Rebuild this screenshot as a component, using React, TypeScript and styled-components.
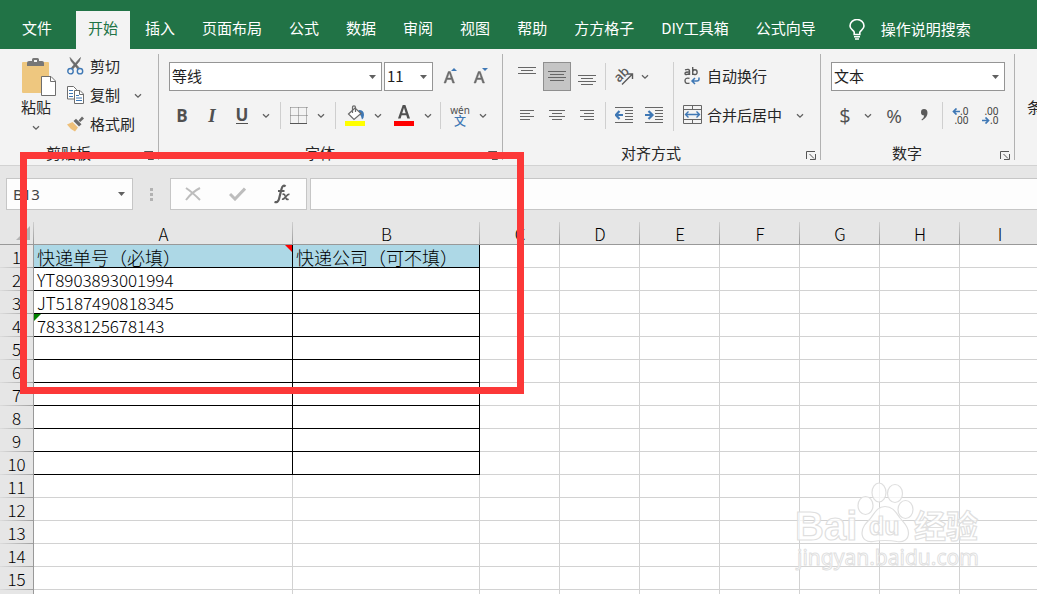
import React from 'react';
import styled, { createGlobalStyle, css } from 'styled-components';

const GlobalStyle = createGlobalStyle`
  *, *::before, *::after { box-sizing: border-box; }
  html, body, #root { height: 100%; }
  body {
    margin: 0;
    overflow: hidden;
    background: #fff;
    color: #262626;
    font-family: "Noto Sans CJK SC", "Noto Sans", sans-serif;
    font-size: 15px;
    line-height: 20px;
  }
  button, select, input { font: inherit; color: inherit; }
  button { border: 0; margin: 0; padding: 0; background: transparent; white-space: nowrap; }
  svg { display: block; flex: none; }
`;

const Workbook = styled.div`
  position: relative;
  display: flex;
  flex-direction: column;
  height: 100vh;
  overflow: hidden;
`;

/* ---------- tab strip ---------- */

const TabStrip = styled.nav`
  display: flex;
  gap: 3px;
  padding: 11px 10px 0;
  background: #217346;
  color: #fff;
`;

const Tab = styled.button<{ $active?: boolean; $file?: boolean }>`
  height: 38px;
  padding: 0 12px 4px;
  flex: none;
  color: ${(p) => (p.$active ? '#217346' : '#fff')};
  background: ${(p) => (p.$active ? '#f3f3f3' : 'transparent')};
  margin-right: ${(p) => (p.$file ? '9px' : '0')};
`;

const TellMe = styled.button`
  display: flex;
  align-items: center;
  gap: 16px;
  height: 38px;
  padding-bottom: 2px;
  margin-left: 18px;
  color: #fff;
`;

/* ---------- ribbon ---------- */

const Ribbon = styled.div`
  display: flex;
  background: #f3f3f3;
  border-bottom: 1px solid #d2d2d2;
  overflow: hidden;
`;

const Group = styled.section<{ $w: number }>`
  display: flex;
  flex-direction: column;
  flex: none;
  width: ${(p) => p.$w}px;
  padding-top: 8px;
`;

const GroupDivider = styled.div`
  flex: none;
  width: 1px;
  margin: 5px 0;
  background: #b1b1b1;
`;

const GroupBody = styled.div`
  display: flex;
  flex: 1;
  min-height: 85px;
  padding: 5px 0 0 10px;
`;

const ClipboardBody = styled.div`
  display: flex;
  flex: 1;
  align-items: flex-start;
  gap: 9px;
  min-height: 85px;
  padding-left: 14px;
`;

const GroupFooter = styled.div`
  display: flex;
  align-items: center;
  height: 23px;
  padding-bottom: 2px;
  text-align: center;
`;

const GroupLabel = styled.span`
  flex: 1;
`;

const Launcher = styled.button`
  display: flex;
  justify-content: center;
  width: 21px;
  padding: 5px 0 0 2px;
`;

const ToolRows = styled.div`
  display: flex;
  flex-direction: column;
  gap: 10px;
`;

const ToolRow = styled.div<{ $gap?: number; $indent?: boolean }>`
  display: flex;
  align-items: center;
  gap: ${(p) => p.$gap ?? 0}px;
  height: 29px;
  margin-left: ${(p) => (p.$indent ? '-2px' : '0')};
`;

const Tool = styled.button<{ $w?: number; $pressed?: boolean }>`
  display: flex;
  align-items: center;
  justify-content: center;
  flex: none;
  width: ${(p) => p.$w ?? 28}px;
  height: 29px;
  color: #505050;
  ${(p) =>
    p.$pressed &&
    css`
      background: #c5c5c5;
      border: 1px solid #8f8f8f;
    `}
`;

const Glyph = styled.span<{ $italic?: boolean; $underline?: boolean; $size?: number; $serif?: boolean; $plain?: boolean }>`
  font-family: ${(p) => (p.$serif ? '"Liberation Serif", serif' : '"Open Sans", "Noto Sans", sans-serif')};
  font-size: ${(p) => p.$size ?? 17}px;
  line-height: 16px;
  font-weight: ${(p) => (p.$plain ? 500 : 700)};
  font-style: ${(p) => (p.$italic ? 'italic' : 'normal')};
  border-bottom: ${(p) => (p.$underline ? '1px solid #505050' : '0')};
`;

const Split = styled.div<{ $tall?: boolean; $space?: number }>`
  flex: none;
  width: 1px;
  height: ${(p) => (p.$tall ? '69px' : '27px')};
  margin: 0 ${(p) => p.$space ?? 5}px;
  background: #cfcfcf;
`;

const LabelTool = styled.button<{ $icon?: number; $gap?: number }>`
  display: flex;
  align-items: center;
  gap: ${(p) => p.$gap ?? 2}px;
  padding-bottom: 2px;
  > span:first-child {
    display: flex;
    justify-content: center;
    width: ${(p) => p.$icon ?? 26}px;
  }
`;

const PasteTool = styled.button`
  display: flex;
  flex-direction: column;
  align-items: center;
  width: 44px;
  padding-top: 1px;
  > svg:last-child { margin-top: 8px; }
`;

const ClipboardList = styled.div`
  display: flex;
  flex-direction: column;
  gap: 9px;
`;

const ClipboardRow = styled.div`
  display: flex;
  align-items: center;
  gap: 11px;
  height: 20px;
`;

const MoreTool = styled.button`
  width: 30px;
  flex: none;
  margin: 48px 0 0 12px;
  height: 20px;
  text-align: left;
`;

/* ---------- drop-downs ---------- */

const SelectBox = styled.label<{ $w: number; $soft?: boolean }>`
  position: relative;
  display: block;
  flex: none;
  width: ${(p) => p.$w}px;
  height: ${(p) => (p.$soft ? 32 : 29)}px;
  select, input {
    appearance: none;
    width: 100%;
    height: 100%;
    margin: 0;
    padding: 0 16px ${(p) => (p.$soft ? 0 : 2)}px ${(p) => (p.$soft ? 6 : 2)}px;
    border: 1px solid ${(p) => (p.$soft ? '#c6c6c6' : '#959595')};
    border-radius: 0;
    background: ${(p) => (p.$soft ? '#fdfdfd' : '#fff')};
    color: ${(p) => (p.$soft ? '#444' : '#1e1e1e')};
    outline: 0;
  }
  svg { position: absolute; right: ${(p) => (p.$soft ? 8 : 6)}px; top: 50%; margin-top: -2px; }
`;

const SoftLatin = styled.span`
  display: contents;
  select, input { font-family: "Noto Sans", sans-serif; }
`;

/* ---------- formula bar ---------- */

const FormulaBar = styled.div`
  display: flex;
  align-items: center;
  height: 56px;
  padding-left: 6px;
  background: #e6e6e6;
`;

const Grip = styled.div`
  display: flex;
  flex-direction: column;
  gap: 2px;
  width: 37px;
  align-items: center;
  i { width: 3px; height: 3px; background: #b2b2b2; }
`;

const FormulaActions = styled.div`
  display: flex;
  align-items: center;
  width: 137px;
  height: 32px;
  flex: none;
  background: #fdfdfd;
  border: 1px solid #c6c6c6;
  margin-right: 3px;
  button {
    flex: 1;
    display: flex;
    justify-content: center;
    padding-right: 2px;
  }
`;

const FormulaInput = styled.input`
  flex: 1;
  min-width: 0;
  height: 32px;
  padding: 0 6px;
  border: 1px solid #c6c6c6;
  border-right: 0;
  background: #fdfdfd;
  outline: 0;
`;

/* ---------- sheet ---------- */

const Sheet = styled.main`
  flex: 1;
  min-height: 0;
  overflow: hidden;
`;

const Grid = styled.table`
  width: 100%;
  min-width: 1040px;
  table-layout: fixed;
  border-collapse: separate;
  border-spacing: 0;
  font-size: 17px;
  line-height: 20px;
  color: #000;
  th, td { padding: 0; font-weight: 300; white-space: nowrap; }
`;

const ColHead = styled.th`
  height: 23px;
  padding-top: 2px !important;
  border-bottom: 1px solid #999;
  background: linear-gradient(#cfcfcf, #999) right / 1px 100% no-repeat #e6e6e6;
`;

const Corner = styled.th`
  height: 23px;
  border-bottom: 1px solid #999;
  background: linear-gradient(#cfcfcf, #999) right / 1px 100% no-repeat #e6e6e6;
  svg { margin-left: 16px; }
`;

const RowHead = styled.th`
  height: 23px;
  border-right: 1px solid #999;
  background: linear-gradient(90deg, #dcdcdc, #a0a0a0) bottom / 100% 1px no-repeat #e6e6e6;
`;

const Cell = styled.td<{ $boxed: boolean; $title: boolean }>`
  position: relative;
  height: 23px;
  padding: 2px 0 0 3px !important;
  border-right: 1px solid ${(p) => (p.$boxed ? '#000' : '#d2d2d2')};
  border-bottom: 1px solid ${(p) => (p.$boxed ? '#000' : '#d2d2d2')};
  background: ${(p) => (p.$title ? '#add8e6' : '#fff')};
  font-size: ${(p) => (p.$title ? 18 : 17)}px;
`;

const Flag = styled.i<{ $kind: 'note' | 'text' }>`
  position: absolute;
  top: 0;
  ${(p) => (p.$kind === 'note' ? 'right: 0;' : 'left: 0;')}
  width: 7px;
  height: 7px;
  background: ${(p) => (p.$kind === 'note' ? '#f00' : '#008000')};
  clip-path: ${(p) =>
    p.$kind === 'note' ? 'polygon(0 0, 100% 0, 100% 100%)' : 'polygon(0 0, 100% 0, 0 100%)'};
`;

/* ---------- overlays ---------- */

const Highlight = styled.div`
  position: absolute;
  left: 20px;
  top: 152px;
  width: 504px;
  height: 242px;
  border: 7px solid #fc3838;
  pointer-events: none;
`;

const Watermark = styled.div`
  position: absolute;
  left: 790px;
  top: 478px;
  pointer-events: none;
`;

/* ---------- icons ---------- */

const G = '#6a6a6a';
const BLUE = '#3f78b5';

const Chevron = () => (
  <svg width="8" height="6" viewBox="0 0 8 6" fill="none" stroke="#606060" strokeWidth="1.3">
    <path d="M1 1.2 4 4.2 7 1.2" />
  </svg>
);
const Caret = () => (
  <svg width="7" height="4" viewBox="0 0 7 4" fill="#606060">
    <path d="M0 0h7L3.500 4z" />
  </svg>
);
const Bulb = () => (
  <svg width="16" height="21" viewBox="0 0 16 21" fill="none" stroke="#fff" strokeWidth="1.6">
    <path d="M5.200 15.500v-2.300C4.800 11.400 1 10.300 1 7a6.800 6.300 0 0 1 14 0c0 3.300-3.600 4.400-4.200 6.200v2.300z" />
    <path d="M5 17.800h6M6 20h4" strokeWidth="1.400" />
  </svg>
);
const PasteIcon = () => (
  <svg width="40" height="39" viewBox="-6 0 40 39">
    <rect x="0" y="4" width="27" height="31" rx="1" fill="#eec77f" />
    <path d="M5 8V5q0-2 2-2h3V1.500Q10 0 11.500 0h4Q17 0 17 1.500V3h3q2 0 2 2v3z" fill="#777" />
    <rect x="12" y="2" width="3" height="2" fill="#f3f3f3" />
    <path d="M19.500 18.500h9.500l4.500 4.500v14.500h-14z" fill="#fff" stroke="#6e6e6e" />
    <path d="M28.500 18.500v5h5" fill="none" stroke="#6e6e6e" />
  </svg>
);
const CutIcon = () => (
  <svg width="17" height="18" viewBox="0 0 17 18" fill="none">
    <path d="M3 0.500 4 4l6.500 8 1.500-1.500z" fill={G} stroke={G} strokeWidth=".6" />
    <path d="M13.500 0.500 12.500 4 6 12l-1.500-1.500z" fill={G} stroke={G} strokeWidth=".6" />
    <circle cx="3.500" cy="14.200" r="2.700" stroke={BLUE} strokeWidth="1.400" />
    <circle cx="13" cy="14.200" r="2.700" stroke={BLUE} strokeWidth="1.400" />
  </svg>
);
const CopyIcon = () => (
  <svg width="17" height="18" viewBox="0 0 17 18" fill="#fff" stroke="#6e6e6e">
    <path d="M.5.500h6l3 3v9.500h-9z" />
    <path d="M2 4.500h4M2 7.500h4M2 10.500h4" stroke={BLUE} />
    <path d="M7.500 4.500h5.500l3.500 3.500v9.500h-9z" />
    <path d="M12.500 4.500v4h4" fill="none" />
    <path d="M9 9.500h3M9 12h6M9 14.500h6" stroke={BLUE} />
  </svg>
);
const BrushIcon = () => (
  <svg width="17" height="16" viewBox="0 0 17 16">
    <path d="M0 8.500 5.500 6l5.500 5.500L8 15.500Q3 13 0 8.500z" fill="#eec07a" />
    <path d="M6.500 5 9 2.800l5.500 5.400L12 10.500z" fill={G} />
    <path d="M11.500 4.500 15 .500 17 2.500 13.300 6z" fill={G} />
  </svg>
);
const BorderIcon = () => (
  <svg width="18" height="17" viewBox="0 0 18 17" fill="none" stroke="#777">
    <path d="M.5.500h17M.5 8.500h17M.500.500v16M8.500.500v16M16.500.500v16" strokeDasharray="1 1" />
    <path d="M0 16.500h17" stroke="#555" />
  </svg>
);
const FillIcon = () => (
  <svg width="20" height="21" viewBox="0 0 20 21" fill="none">
    <rect y="16" width="20" height="5" fill="#ff0" />
    <path d="M14 5q5 0 5 5 0 3-2 4.500-.5-4-4-7z" fill={BLUE} />
    <path d="M3.500 9 10 3l6 5.500-7 6z" fill="#fff" stroke={G} strokeWidth="1.200" />
    <path d="M7.500 8V2.500Q7.500.800 9 .800t1.500 1.700V7" stroke={G} strokeWidth="1.200" />
  </svg>
);
const FontColorIcon = () => (
  <svg width="20" height="21" viewBox="0 0 20 21">
    <path d="M4 13.500 8.700 0h2.700L16 13.500h-2.700l-1-3.200H7.600l-1 3.200zM8.200 8.200h3.500L10 2.700z" fill="#505050" />
    <rect y="16" width="20" height="5" fill="#f00" />
  </svg>
);
const SizeIcon = ({ down }: { down?: boolean }) => (
  <svg width="18" height="19" viewBox="-2 0 18 19">
    <path
      d="M2 16 6.300 4.500h2L12.500 16H10.700l-1.200-3.500H5L3.800 16zM5.500 11h3.500L7.300 5.800z"
      fill={G}
      stroke={G}
      strokeWidth=".5"
    />
    <path d={down ? 'M10 1h6l-3 3z' : 'M9 4h6l-3-3z'} fill={BLUE} />
  </svg>
);

const LineIcon = ({ rows }: { rows: [number, number, number][] }) => (
  <svg width="20" height="21" viewBox="0 0 20 21" stroke="#666" fill="none">
    {rows.map(([x, y, w]) => (
      <path key={y} d={`M${x} ${y}.500h${w}`} />
    ))}
  </svg>
);
const TOP: [number, number, number][] = [[1, 1, 18], [4, 4, 12], [1, 7, 18]];
const MIDDLE: [number, number, number][] = [[1, 5, 18], [3, 8, 14], [1, 11, 18], [3, 14, 14]];
const BOTTOM: [number, number, number][] = [[1, 9, 18], [4, 12, 12], [1, 15, 18], [4, 18, 12]];
const LEFT: [number, number, number][] = [[3, 5, 14], [3, 8, 10], [3, 11, 14], [3, 14, 10]];
const CENTER: [number, number, number][] = [[2, 5, 16], [5, 8, 10], [2, 11, 16], [5, 14, 10]];
const RIGHT: [number, number, number][] = [[3, 5, 14], [7, 8, 10], [3, 11, 14], [7, 14, 10]];

const OrientIcon = () => (
  <svg width="20" height="19" viewBox="0 0 20 19" overflow="visible">
    <text
      transform="translate(5 16) rotate(-45)"
      fontFamily="Open Sans, sans-serif"
      fontWeight="600"
      fontSize="13"
      fill="#5a5a5a"
    >
      ab
    </text>
    <path d="M8 17.500 18 7.500M13.500 7h5v5" fill="none" stroke="#5a5a5a" strokeWidth="1.400" />
  </svg>
);
const IndentIcon = ({ right }: { right?: boolean }) => (
  <svg width="18" height="17" viewBox="0 0 18 17" fill="none" stroke="#666">
    <path d="M0 .5h18M10 3.500h8M10 6.500h8M10 9.500h8M10 12.500h8M0 15.500h18" />
    <path
      d={right ? 'M0 8h7M3.500 4 7.500 8l-4 4' : 'M8 8H1M4.500 4 .8 8l3.700 4'}
      stroke={BLUE}
      strokeWidth="2.200"
    />
  </svg>
);
const WrapIcon = () => (
  <svg width="16" height="18" viewBox="0 0 16 18" fill="none" stroke="#5a5a5a" strokeWidth="1.400">
    <path d="M1 2.900q4.500-1.400 4.500 1.200V8M5.500 5Q1 4.800 1 6.400t1.800 1q2 0 2.700-1.400" />
    <path d="M8.700 0v8M8.700 5q0-2.200 2.200-2.200t2.200 2.500-2.300 2.200T8.700 6" />
    <path d="M5.500 11.400q-4.500-1-4.500 2.400t4.500 2.300" />
    <path d="M15 10.500v1.500q0 2-2 2H8.500M11 11l-3 3 3 3" stroke={BLUE} strokeWidth="1.500" />
  </svg>
);
const MergeIcon = () => (
  <svg width="19" height="19" viewBox="0 0 19 19" fill="none" stroke="#666">
    <path d="M.5.500h18v18H.500zM.5 4.500h18M.5 14.500h18M9.500.500v4M9.500 14.500v4" />
    <path d="M3 9.500h13M5.500 6.500l-3 3 3 3M13.500 6.500l3 3-3 3" stroke={BLUE} strokeWidth="1.400" />
  </svg>
);
const LauncherIcon = () => (
  <svg width="10" height="9" viewBox="0 0 10 9" fill="none" stroke="#555">
    <path d="M.5 8V.5H9" />
    <path d="M3.500 3 8 7.500M9.500 3v5.500H4" />
  </svg>
);

const DecimalText = styled.span`
  display: flex;
  align-items: center;
  justify-content: flex-end;
  width: 16px;
  height: 9px;
  font: 10px/9px "Noto Sans", sans-serif;
  color: #404040;
`;
const DecimalStack = styled.span`
  display: flex;
  flex-direction: column;
  padding-right: 3px;
`;
const SmallArrow = ({ right }: { right?: boolean }) => (
  <svg width="8" height="7" viewBox="0 0 8 7" fill="none" stroke={BLUE} strokeWidth="1.700">
    <path d={right ? 'M0 3.500h6M3.500 .5l3 3-3 3' : 'M8 3.500H1.500M4.500.500l-3 3 3 3'} />
  </svg>
);
const Phonetic = styled.span`
  display: flex;
  flex-direction: column;
  align-items: center;
  font: 10px/9px "Noto Sans", sans-serif;
  b {
    font: 500 12px/11px "Noto Sans CJK SC", sans-serif;
    color: ${BLUE};
  }
`;

const BaiduMark = () => (
  <svg width="200" height="98" viewBox="0 0 200 98" fill="#fff" fillOpacity=".75" stroke="#dfdfdf" strokeWidth="1.200">
    <ellipse cx="75.500" cy="27.500" rx="7.500" ry="9" />
    <ellipse cx="89" cy="14.500" rx="7" ry="9.500" />
    <ellipse cx="105" cy="15.500" rx="7.500" ry="9" />
    <ellipse cx="115.500" cy="31.500" rx="7.500" ry="9" />
    <path d="M95 28.500c8 0 11 6 15 11.500 4 5 8.500 8 8.500 15 0 7-5.500 9.500-11.500 8.500-5-1-8-1-12-1s-7 0-12 1c-6 1-11-2.500-11-8.500s4-10 8-14c4-5 7-12.500 15-12.500z" />
    <text x="5" y="62" fontFamily="Liberation Sans, sans-serif" fontWeight="700" fontSize="40">Bai</text>
    <text x="79" y="57" fontFamily="Liberation Sans, sans-serif" fontWeight="700" fontSize="25">du</text>
    <text x="124" y="60" fontFamily="Noto Sans CJK SC, sans-serif" fontWeight="700" fontSize="32">经验</text>
    <text x="7" y="87" fontFamily="Noto Sans, sans-serif" fontSize="21" strokeWidth="1">jingyan.baidu.com</text>
  </svg>
);

/* ---------- data ---------- */

const TABS = ['插入', '页面布局', '公式', '数据', '审阅', '视图', '帮助', '方方格子', 'DIY工具箱', '公式向导'];
const COLUMNS = ['A', 'B', 'C', 'D', 'E', 'F', 'G', 'H', 'I'];
const ROWS = Array.from({ length: 15 }, (_, i) => i + 1);
const VALUES: Record<string, string> = {
  A1: '快递单号（必填）',
  B1: '快递公司（可不填）',
  A2: 'YT8903893001994',
  A3: 'JT5187490818345',
  A4: '78338125678143',
};
const FLAGS: Record<string, 'note' | 'text'> = { A1: 'note', A4: 'text' };

const Drop = ({ label, w = 18 }: { label: string; w?: number }) => (
  <Tool $w={w} aria-label={label}>
    <Chevron />
  </Tool>
);

const Dropdown = ({ label, w, value }: { label: string; w: number; value: string }) => (
  <SelectBox $w={w}>
    <select aria-label={label} defaultValue={value}>
      <option>{value}</option>
    </select>
    <Caret />
  </SelectBox>
);

const Footer = ({ label }: { label: string }) => (
  <GroupFooter>
    <GroupLabel>{label}</GroupLabel>
    <Launcher aria-label={`${label}设置`}>
      <LauncherIcon />
    </Launcher>
  </GroupFooter>
);

export default function App() {
  return (
    <Workbook>
      <GlobalStyle />
      <TabStrip>
        <Tab $file>文件</Tab>
        <Tab $active>开始</Tab>
        {TABS.map((t) => (
          <Tab key={t}>{t}</Tab>
        ))}
        <TellMe>
          <Bulb />
          操作说明搜索
        </TellMe>
      </TabStrip>

      <Ribbon>
        <Group $w={158}>
          <ClipboardBody>
            <PasteTool>
              <PasteIcon />
              <span>粘贴</span>
              <Chevron />
            </PasteTool>
            <ClipboardList>
              <ClipboardRow>
                <LabelTool $icon={17} $gap={6}>
                  <span><CutIcon /></span>剪切
                </LabelTool>
              </ClipboardRow>
              <ClipboardRow>
                <LabelTool $icon={17} $gap={6}>
                  <span><CopyIcon /></span>复制
                </LabelTool>
                <Drop label="复制选项" w={14} />
              </ClipboardRow>
              <ClipboardRow>
                <LabelTool $icon={17} $gap={6}>
                  <span><BrushIcon /></span>格式刷
                </LabelTool>
              </ClipboardRow>
            </ClipboardList>
          </ClipboardBody>
          <Footer label="剪贴板" />
        </Group>
        <GroupDivider />

        <Group $w={343}>
          <GroupBody>
            <ToolRows>
              <ToolRow $gap={2}>
                <Dropdown label="字体" w={213} value="等线" />
                <Dropdown label="字号" w={49} value="11" />
                <Tool aria-label="增大字号"><SizeIcon /></Tool>
                <Tool aria-label="减小字号"><SizeIcon down /></Tool>
              </ToolRow>
              <ToolRow $indent>
                <Tool $w={30}><Glyph>B</Glyph></Tool>
                <Tool $w={30}><Glyph $italic $serif $size={19}>I</Glyph></Tool>
                <Tool $w={30}><Glyph $underline>U</Glyph></Tool>
                <Drop label="下划线选项" />
                <Split />
                <Tool $w={26} aria-label="边框"><BorderIcon /></Tool>
                <Drop label="边框选项" />
                <Split />
                <Tool aria-label="填充颜色"><FillIcon /></Tool>
                <Drop label="填充颜色选项" />
                <Tool $w={34} aria-label="字体颜色"><FontColorIcon /></Tool>
                <Drop label="字体颜色选项" w={14} />
                <Split />
                <Tool><Phonetic>wén<b>文</b></Phonetic></Tool>
                <Drop label="拼音选项" />
              </ToolRow>
            </ToolRows>
          </GroupBody>
          <Footer label="字体" />
        </Group>
        <GroupDivider />

        <Group $w={317}>
          <GroupBody>
            <ToolRows>
              <ToolRow>
                <ToolRow $gap={2}>
                  <Tool aria-label="顶端对齐"><LineIcon rows={TOP} /></Tool>
                  <Tool $pressed aria-label="垂直居中"><LineIcon rows={MIDDLE} /></Tool>
                  <Tool aria-label="底端对齐"><LineIcon rows={BOTTOM} /></Tool>
                </ToolRow>
                <Split $space={4} />
                <Tool aria-label="方向"><OrientIcon /></Tool>
                <Drop label="方向选项" w={14} />
              </ToolRow>
              <ToolRow>
                <ToolRow $gap={2}>
                  <Tool aria-label="左对齐"><LineIcon rows={LEFT} /></Tool>
                  <Tool aria-label="居中"><LineIcon rows={CENTER} /></Tool>
                  <Tool aria-label="右对齐"><LineIcon rows={RIGHT} /></Tool>
                </ToolRow>
                <Split $space={4} />
                <ToolRow $gap={2}>
                  <Tool aria-label="减少缩进量"><IndentIcon /></Tool>
                  <Tool aria-label="增加缩进量"><IndentIcon right /></Tool>
                </ToolRow>
              </ToolRow>
            </ToolRows>
            <Split $tall />
            <ToolRows>
              <ToolRow>
                <LabelTool><span><WrapIcon /></span>自动换行</LabelTool>
              </ToolRow>
              <ToolRow $gap={11}>
                <LabelTool><span><MergeIcon /></span>合并后居中</LabelTool>
                <Drop label="合并选项" w={14} />
              </ToolRow>
            </ToolRows>
          </GroupBody>
          <Footer label="对齐方式" />
        </Group>
        <GroupDivider />

        <Group $w={193}>
          <GroupBody>
            <ToolRows>
              <ToolRow>
                <Dropdown label="数字格式" w={174} value="文本" />
              </ToolRow>
              <ToolRow>
                <Tool><Glyph $plain $size={20}>$</Glyph></Tool>
                <Drop label="货币选项" />
                <Tool $w={34}><Glyph $plain $size={19}>%</Glyph></Tool>
                <Tool $w={26} aria-label="千位分隔样式">
                  <svg width="7" height="13" viewBox="0 0 7 13" fill="#5a5a5a">
                    <path d="M3 0q3.500 0 3.500 4T1 11.500L.5 10.500Q3 9 3.200 6.500 0 6.500 0 3.200 0 0 3 0z" />
                  </svg>
                </Tool>
                <Split />
                <ToolRow $gap={2}>
                  <Tool>
                    <DecimalStack>
                      <DecimalText><SmallArrow />.0</DecimalText>
                      <DecimalText>.00</DecimalText>
                    </DecimalStack>
                  </Tool>
                  <Tool>
                    <DecimalStack>
                      <DecimalText>.00</DecimalText>
                      <DecimalText><SmallArrow right />.0</DecimalText>
                    </DecimalStack>
                  </Tool>
                </ToolRow>
              </ToolRow>
            </ToolRows>
          </GroupBody>
          <Footer label="数字" />
        </Group>
        <GroupDivider />
        <MoreTool>条</MoreTool>
      </Ribbon>

      <FormulaBar>
        <SoftLatin>
          <SelectBox $w={127} $soft>
            <input aria-label="名称框" defaultValue="B13" />
            <Caret />
          </SelectBox>
        </SoftLatin>
        <Grip><i /><i /><i /></Grip>
        <FormulaActions>
          <button aria-label="取消">
            <svg width="16" height="14" viewBox="0 0 16 14" fill="none" stroke="#bdbdbd" strokeWidth="2">
              <path d="M1 1q6 4 14 12M15 1Q7 5 1 13" />
            </svg>
          </button>
          <button aria-label="输入">
            <svg width="17" height="14" viewBox="0 0 17 14" fill="none" stroke="#bdbdbd" strokeWidth="3">
              <path d="M1 7l5 5L16 1.500" />
            </svg>
          </button>
          <button aria-label="插入函数">
            <svg width="17" height="20" viewBox="0 0 17 20" fill="none" stroke="#5e5e5e">
              <path d="M11.500 2.500Q9 0 7.500 5L5 15q-1 4-4.500 3M4 7h6.500" strokeWidth="2.200" />
              <path d="M8.500 10.500q1.800-1 2.500 1l1.200 3q.8 1.500 2.300.5M15.500 10.500q-1.500-.5-3 1.500L10.500 14q-1 1.500-2.500 1" strokeWidth="1.700" />
            </svg>
          </button>
        </FormulaActions>
        <FormulaInput aria-label="编辑栏" />
      </FormulaBar>

      <Sheet>
        <Grid>
          <colgroup>
            <col width="34" />
            <col width="259" />
            <col width="187" />
            {COLUMNS.slice(2, -1).map((c) => (
              <col key={c} width="80" />
            ))}
            <col />
          </colgroup>
          <thead>
            <tr>
              <Corner aria-label="全选">
                <svg width="14" height="14" viewBox="0 0 14 14" fill="#b4b4b4">
                  <path d="M14 0v14H0z" />
                </svg>
              </Corner>
              {COLUMNS.map((c) => (
                <ColHead key={c} scope="col">{c}</ColHead>
              ))}
            </tr>
          </thead>
          <tbody>
            {ROWS.map((r) => (
              <tr key={r}>
                <RowHead scope="row">{r}</RowHead>
                {COLUMNS.map((c, i) => (
                  <Cell key={c} $boxed={i < 2 && r <= 10} $title={i < 2 && r === 1}>
                    {VALUES[c + r]}
                    {FLAGS[c + r] && <Flag $kind={FLAGS[c + r]} />}
                  </Cell>
                ))}
              </tr>
            ))}
            <tr>
              <RowHead />
              {COLUMNS.map((c) => (
                <Cell key={c} $boxed={false} $title={false} />
              ))}
            </tr>
          </tbody>
        </Grid>
      </Sheet>

      <Watermark>
        <BaiduMark />
      </Watermark>
      <Highlight />
    </Workbook>
  );
}
